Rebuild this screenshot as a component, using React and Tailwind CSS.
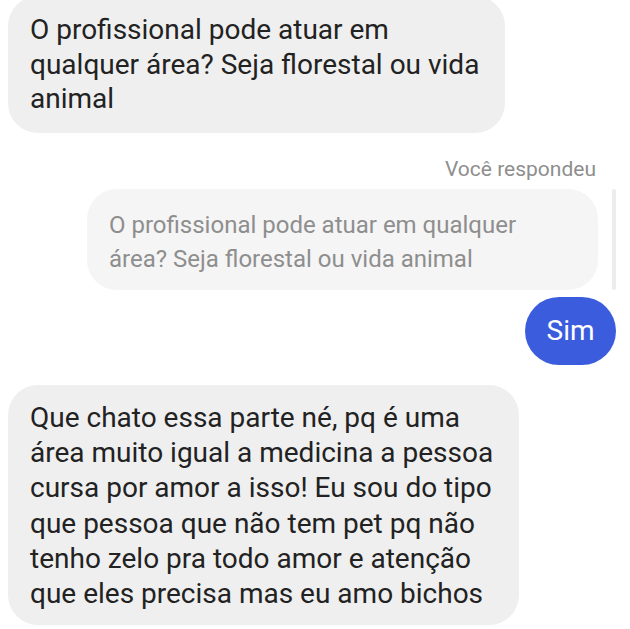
export default function App() {
  return (
    <div className="w-[630px] h-[629px] overflow-hidden bg-white flex flex-col" style={{ fontFamily: "Roboto, 'Noto Sans', sans-serif" }}>
      <div className="pl-2 mt-[-4px]">
        <div className="w-[497px] h-[137px] bg-[#efefef] rounded-[30px] pl-[22px] pt-[17px] text-[28px] leading-[34.5px] text-[#222222] whitespace-nowrap">
          O profissional pode atuar em<br />qualquer área? Seja florestal ou vida<br />animal
        </div>
      </div>
      <div className="pr-[34px] mt-[22px] text-right text-[21px] leading-[28px] text-[#8e8e8e]">
        Você respondeu
      </div>
      <div className="flex justify-end mt-[6px] pr-[14px] gap-[14px]">
        <div className="w-[511px] h-[101px] bg-[#f5f5f5] rounded-[30px] pl-[22px] pt-[19px] text-[24px] leading-[34px] text-[#8e8e8e] whitespace-nowrap">
          O profissional pode atuar em qualquer<br />área? Seja florestal ou vida animal
        </div>
        <div className="w-[4px] h-[101px] rounded-full bg-[#ececec]" />
      </div>
      <div className="flex justify-end pr-[14px] mt-[7px]">
        <div className="w-[91px] h-[68px] rounded-[34px] bg-[#3b5ddd] text-white text-[28px] flex items-center justify-center">
          Sim
        </div>
      </div>
      <div className="pl-2 mt-[20px]">
        <div className="w-[511px] h-[240px] bg-[#efefef] rounded-[30px] pl-[22px] pt-[15px] text-[28px] leading-[35.2px] text-[#222222] whitespace-nowrap">
          Que chato essa parte né, pq é uma<br />área muito igual a medicina a pessoa<br />cursa por amor a isso! Eu sou do tipo<br />que pessoa que não tem pet pq não<br />tenho zelo pra todo amor e atenção<br />que eles precisa mas eu amo bichos
        </div>
      </div>
    </div>
  );
}
